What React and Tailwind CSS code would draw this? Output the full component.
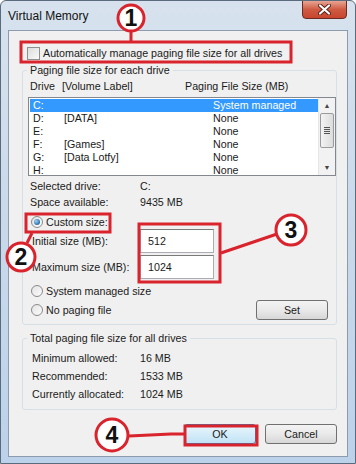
import React from 'react';

const DRIVES = [
  { d: 'C:', label: '', size: 'System managed' },
  { d: 'D:', label: '[DATA]', size: 'None' },
  { d: 'E:', label: '', size: 'None' },
  { d: 'F:', label: '[Games]', size: 'None' },
  { d: 'G:', label: '[Data Lotfy]', size: 'None' },
  { d: 'H:', label: '', size: 'None' },
];

function Radio({ checked }) {
  return (
    <span className="relative w-[12px] h-[12px] rounded-full border border-[#8a8a8a] bg-gradient-to-br from-[#e4e4e4] to-[#fbfbfb] shrink-0 flex items-center justify-center">
      {checked && (
        <span className="w-[6px] h-[6px] rounded-full bg-[radial-gradient(circle_at_35%_35%,#9fd3f3,#2a6fa8_70%)]" />
      )}
    </span>
  );
}

function WinButton({ children, focused }) {
  return (
    <div
      className={
        focused
          ? 'h-[20px] w-[72px] rounded-[3px] border border-[#3c7fb1] bg-gradient-to-b from-[#e9f6fd] to-[#c1e3f5] flex items-center justify-center'
          : 'h-[20px] w-[72px] rounded-[3px] border border-[#707070] bg-gradient-to-b from-[#f3f3f3] via-[#e9e9e9] to-[#d7d7d7] flex items-center justify-center'
      }
    >
      {children}
    </div>
  );
}

function GroupBox({ title, className, children }) {
  return (
    <fieldset className={`border border-[#d5dfe5] rounded-[3px] ${className}`}>
      <legend className="ml-[4px] px-[3px] h-[15px] leading-[15px]">{title}</legend>
      {children}
    </fieldset>
  );
}

function Annotations() {
  const red = '#d9232d';
  return (
    <svg className="absolute inset-0 pointer-events-none" width="356" height="464">
      <g fill="none" stroke={red} strokeWidth="3">
        <rect x="20" y="41" width="270" height="20" />
        <rect x="25" y="213" width="84" height="18" />
        <rect x="138" y="223" width="81" height="58" />
        <rect x="184" y="425" width="72" height="19" />
        <line x1="130" y1="30" x2="130" y2="40" />
        <line x1="26" y1="242" x2="31" y2="232" />
        <line x1="220" y1="252" x2="276" y2="233" />
        <polyline points="128,435 170,433 183,433" />
      </g>
      {[
        { cx: 130, cy: 17, r: 13, n: '1' },
        { cx: 20, cy: 256, r: 14, n: '2' },
        { cx: 290, cy: 229, r: 15, n: '3' },
        { cx: 111, cy: 434, r: 16, n: '4' },
      ].map(c => (
        <g key={c.n}>
          <circle cx={c.cx} cy={c.cy} r={c.r} fill="#fff" stroke={red} strokeWidth="3" />
          <text
            x={c.cx}
            y={c.cy + 8}
            textAnchor="middle"
            fontFamily="'Liberation Sans', Arial, sans-serif"
            fontWeight="bold"
            fontSize="23"
            fill="#111"
          >
            {c.n}
          </text>
        </g>
      ))}
    </svg>
  );
}

export default function App() {
  return (
    <div className="relative w-[356px] h-[464px] overflow-hidden bg-gradient-to-b from-[#d7e2ee] via-[#c9d9ea] to-[#bcd2ea] border border-[#5a6b7e] rounded-t-[6px] font-['Liberation_Sans',Arial,sans-serif] text-[10.7px] text-[#1a1a1a]">
      {/* title bar */}
      <div className="h-[29px] flex items-center pl-[7px] text-[12px] text-[#111]">Virtual Memory</div>
      <div className="absolute top-[-1px] right-[8px] w-[45px] h-[19px] rounded-b-[4px] border border-[#6b2b22] bg-gradient-to-b from-[#e6a493] via-[#cf5a42] to-[#c8452e] flex items-center justify-center">
        <svg width="13" height="11" viewBox="0 0 13 11">
          <path d="M2 1.5 L11 9.5 M11 1.5 L2 9.5" stroke="#5a2018" strokeWidth="4" strokeLinecap="round" />
          <path d="M2 1.5 L11 9.5 M11 1.5 L2 9.5" stroke="#fff" strokeWidth="2.2" strokeLinecap="round" />
        </svg>
      </div>

      {/* client area */}
      <div className="ml-[7px] w-[340px] h-[427px] bg-[#f0f0f0] border border-[#8c9cae] flex flex-col">
        <div className="mt-[15px] ml-[18px] h-[15px] flex items-center gap-[3px]">
          <span className="w-[13px] h-[13px] border border-[#8e8f8f] bg-gradient-to-br from-[#dcdcdc] to-[#fafafa]" />
          <span>Automatically manage paging file size for all drives</span>
        </div>

        <GroupBox title="Paging file size for each drive" className="mt-[2px] ml-[13px] w-[315px] h-[262px]">
          <div className="h-[14px] mt-[1px] pl-[7px] flex items-center">
            <span className="w-[32px]">Drive</span>
            <span className="w-[123px]">[Volume Label]</span>
            <span>Paging File Size (MB)</span>
          </div>
          <div className="mt-[4px] ml-[5px] w-[308px] h-[79px] bg-white border border-[#828790] flex">
            <div className="flex-1 pt-[1px] pl-[1px]">
              {DRIVES.map((r, i) => (
                <div
                  key={r.d}
                  className={`h-[13px] flex items-center pl-[3px] ${i === 0 ? 'bg-[#3399ff] text-white' : ''}`}
                >
                  <span className="w-[31px]">{r.d}</span>
                  <span className="w-[149px]">{r.label}</span>
                  <span>{r.size}</span>
                </div>
              ))}
            </div>
            <div className="w-[17px] bg-[#f2f2f2] border-l border-[#e6e6e6] flex flex-col items-center">
              <span className="mt-[4px] text-[7px] leading-[8px] text-[#444]">▲</span>
              <div className="mt-[3px] w-[14px] h-[35px] rounded-[2px] border border-[#9b9b9b] bg-gradient-to-r from-[#f3f3f3] to-[#dcdcdc] flex flex-col items-center justify-center gap-[1px]">
                <span className="w-[6px] h-px bg-[#555]" />
                <span className="w-[6px] h-px bg-[#555]" />
                <span className="w-[6px] h-px bg-[#555]" />
                <span className="w-[6px] h-px bg-[#555]" />
              </div>
              <span className="mt-auto mb-[3px] text-[7px] leading-[8px] text-[#444]">▼</span>
            </div>
          </div>

          <div className="mt-[3px] pl-[7px] h-[14px] flex items-center">
            <span className="w-[110px]">Selected drive:</span>
            <span>C:</span>
          </div>
          <div className="mt-[2px] pl-[7px] h-[14px] flex items-center">
            <span className="w-[110px]">Space available:</span>
            <span>9435 MB</span>
          </div>
          <div className="mt-[6px] pl-[8px] h-[14px] flex items-center gap-[3px]">
            <Radio checked />
            <span>Custom size:</span>
          </div>
          <div className="pl-[9px] h-[24px] flex items-center">
            <span className="w-[108px]">Initial size (MB):</span>
            <div className="w-[74px] h-[24px] bg-white border border-[#abadb3] border-t-[#7a7a7a] pl-[7px] flex items-center">512</div>
          </div>
          <div className="mt-[2px] pl-[9px] h-[24px] flex items-center">
            <span className="w-[108px]">Maximum size (MB):</span>
            <div className="w-[74px] h-[24px] bg-white border border-[#abadb3] border-t-[#7a7a7a] pl-[7px] flex items-center">1024</div>
          </div>
          <div className="mt-[5px] pl-[8px] h-[14px] flex items-center gap-[3px]">
            <Radio />
            <span>System managed size</span>
          </div>
          <div className="mt-[2px] pl-[8px] pr-[8px] flex items-center">
            <div className="flex items-center gap-[3px]">
              <Radio />
              <span>No paging file</span>
            </div>
            <div className="ml-auto">
              <WinButton>Set</WinButton>
            </div>
          </div>
        </GroupBox>

        <GroupBox title="Total paging file size for all drives" className="mt-[6px] ml-[13px] w-[315px] h-[79px]">
          <div className="mt-[5px] pl-[9px] h-[14px] flex items-center">
            <span className="w-[108px]">Minimum allowed:</span>
            <span>16 MB</span>
          </div>
          <div className="mt-[4px] pl-[9px] h-[14px] flex items-center">
            <span className="w-[108px]">Recommended:</span>
            <span>1533 MB</span>
          </div>
          <div className="mt-[4px] pl-[9px] h-[14px] flex items-center">
            <span className="w-[108px]">Currently allocated:</span>
            <span>1024 MB</span>
          </div>
        </GroupBox>

        <div className="mt-[14px] mr-[10px] flex justify-end gap-[9px]">
          <WinButton focused>OK</WinButton>
          <WinButton>Cancel</WinButton>
        </div>
      </div>

      <Annotations />
    </div>
  );
}
